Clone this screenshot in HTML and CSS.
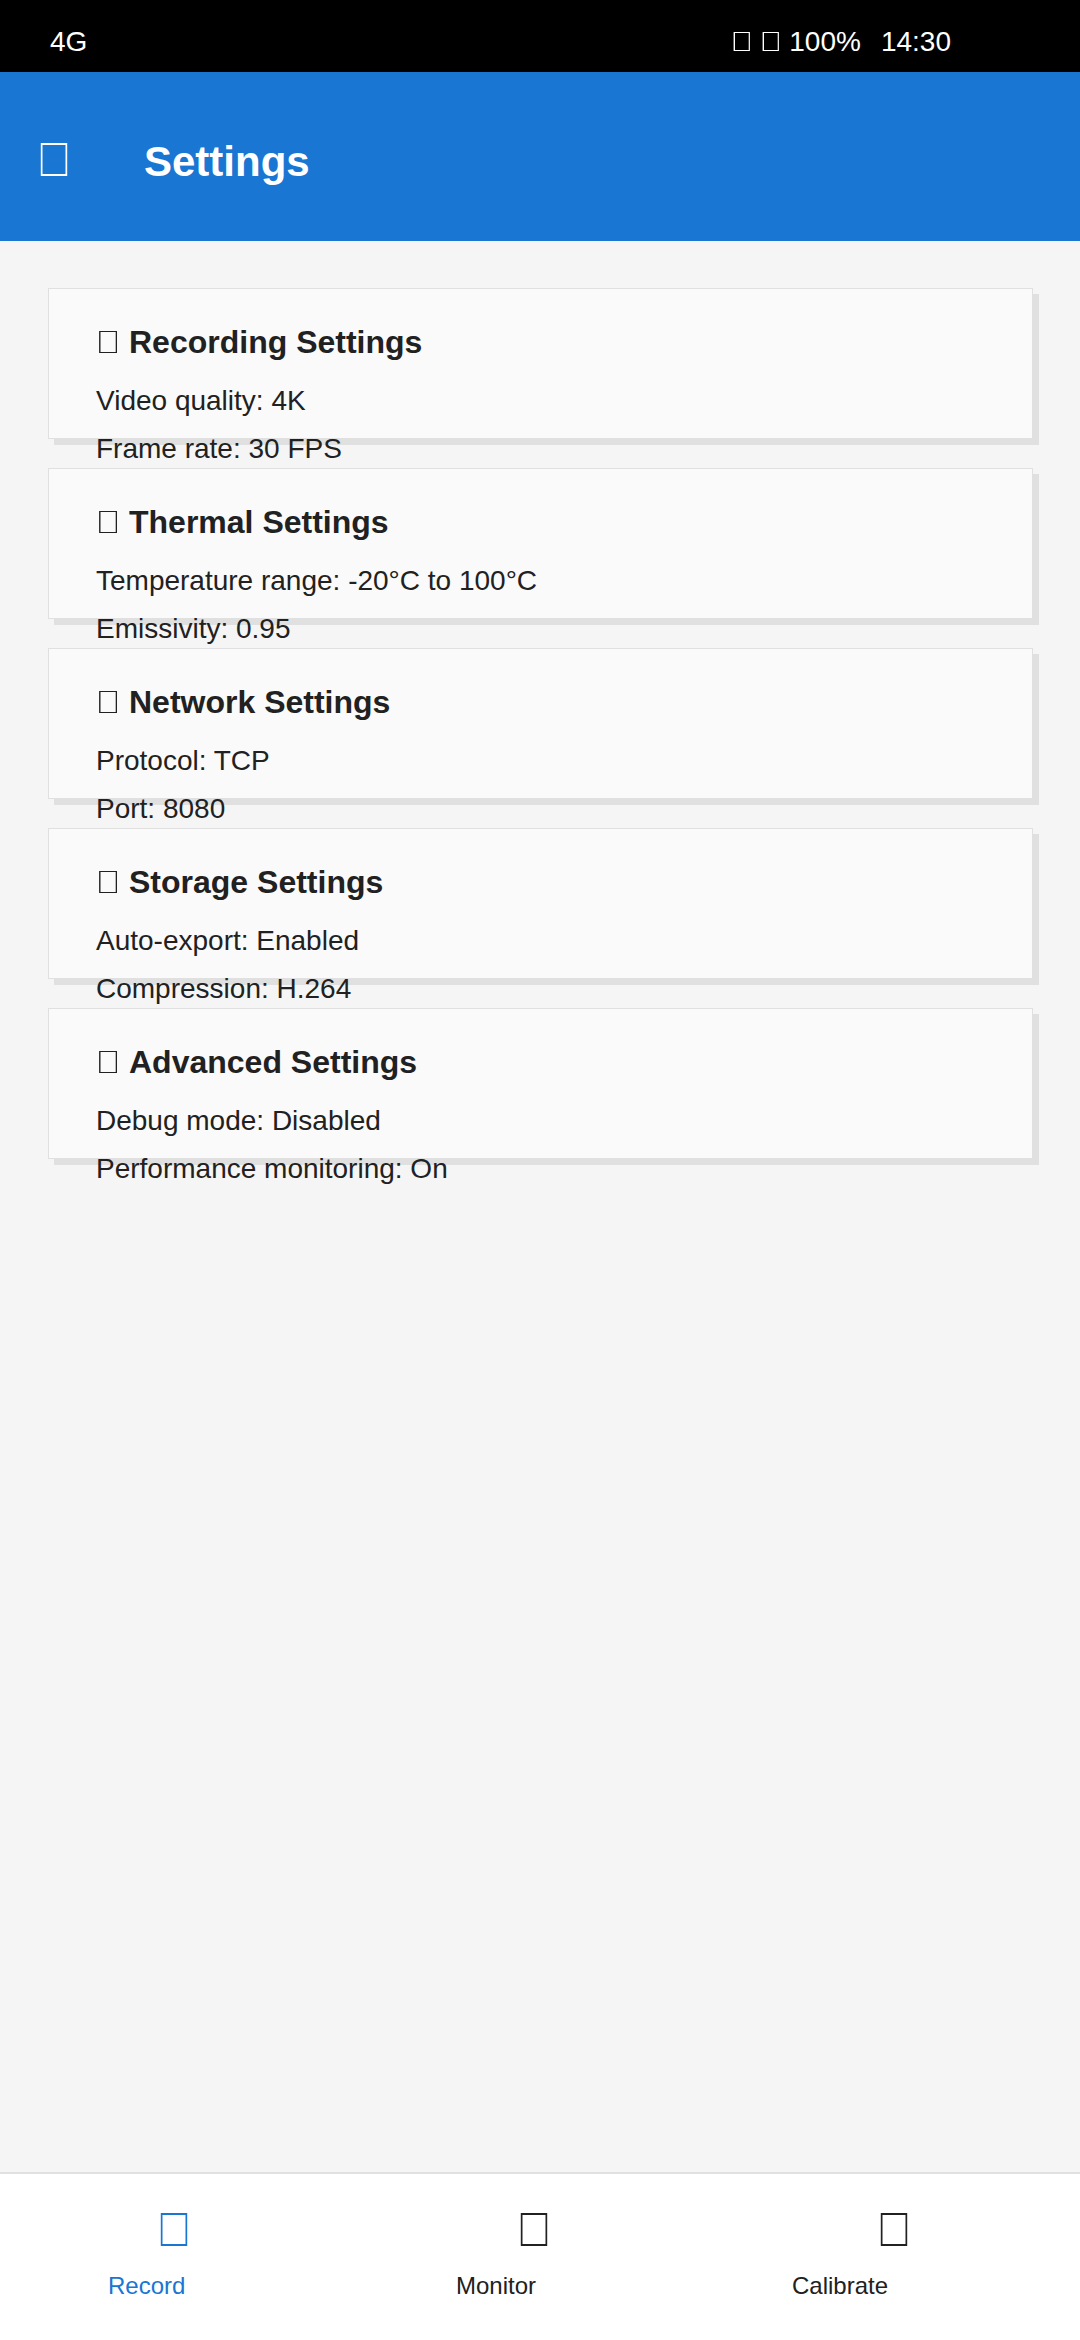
FILE: index.html
```html
<!DOCTYPE html>
<html lang="en">
<head>
  <meta charset="utf-8">
  <meta name="viewport" content="width=device-width, initial-scale=1">
  <title>Settings</title>
  <link rel="stylesheet" href="styles.css">
</head>
<body>
  <svg class="symbols" aria-hidden="true">
    <symbol id="box-sm" viewBox="0 0 21 32">
      <path fill-rule="evenodd" d="M2.6 6H18.9V25H2.6ZM4 7V24H17.7V7Z"/>
    </symbol>
    <symbol id="box-md" viewBox="0 0 24 40">
      <path fill-rule="evenodd" d="M3.1 9H21V31H3.1ZM4.5 10V30H19.7V10Z"/>
    </symbol>
    <symbol id="box-lg" viewBox="0 0 36 48">
      <path fill-rule="evenodd" d="M4.8 5H31.2V38H4.8ZM6.5 7V36H29.5V7Z"/>
    </symbol>
  </svg>

  <div class="screen">
    <div class="status-bar">
      <span>4G</span>
      <div class="status-right">
        <div class="status-battery">
          <svg class="icon-sm" aria-hidden="true"><use href="#box-sm"/></svg>
          <svg class="icon-sm" aria-hidden="true"><use href="#box-sm"/></svg>
          <span>100%</span>
        </div>
        <span>14:30</span>
      </div>
    </div>

    <header class="app-bar">
      <button class="back-button" type="button" aria-label="Back">
        <svg class="icon-lg" aria-hidden="true"><use href="#box-lg"/></svg>
      </button>
      <h1 class="app-title">Settings</h1>
    </header>

    <main class="card-list">
      <section class="card">
        <h2 class="card-title"><svg class="icon-md" aria-hidden="true"><use href="#box-md"/></svg>Recording Settings</h2>
        <div class="card-details">
          <p>Video quality: 4K</p>
          <p>Frame rate: 30 FPS</p>
        </div>
      </section>
      <section class="card">
        <h2 class="card-title"><svg class="icon-md" aria-hidden="true"><use href="#box-md"/></svg>Thermal Settings</h2>
        <div class="card-details">
          <p>Temperature range: -20°C to 100°C</p>
          <p>Emissivity: 0.95</p>
        </div>
      </section>
      <section class="card">
        <h2 class="card-title"><svg class="icon-md" aria-hidden="true"><use href="#box-md"/></svg>Network Settings</h2>
        <div class="card-details">
          <p>Protocol: TCP</p>
          <p>Port: 8080</p>
        </div>
      </section>
      <section class="card">
        <h2 class="card-title"><svg class="icon-md" aria-hidden="true"><use href="#box-md"/></svg>Storage Settings</h2>
        <div class="card-details">
          <p>Auto-export: Enabled</p>
          <p>Compression: H.264</p>
        </div>
      </section>
      <section class="card">
        <h2 class="card-title"><svg class="icon-md" aria-hidden="true"><use href="#box-md"/></svg>Advanced Settings</h2>
        <div class="card-details">
          <p>Debug mode: Disabled</p>
          <p>Performance monitoring: On</p>
        </div>
      </section>
    </main>

    <nav class="bottom-nav" aria-label="Main">
      <button class="nav-item nav-item-active" type="button">
        <svg class="icon-lg nav-icon" aria-hidden="true"><use href="#box-lg"/></svg>
        <span class="nav-label" style="--chars: 6">Record</span>
      </button>
      <button class="nav-item" type="button">
        <svg class="icon-lg nav-icon" aria-hidden="true"><use href="#box-lg"/></svg>
        <span class="nav-label" style="--chars: 7">Monitor</span>
      </button>
      <button class="nav-item" type="button">
        <svg class="icon-lg nav-icon" aria-hidden="true"><use href="#box-lg"/></svg>
        <span class="nav-label" style="--chars: 9">Calibrate</span>
      </button>
    </nav>
  </div>
</body>
</html>
```
FILE: styles.css
```css
:root {
  --primary: #1976d2;
  --background: #f5f5f5;
  --surface: #fafafa;
  --outline: #e0e0e0;
  --text: #212121;
}

* {
  box-sizing: border-box;
}

body {
  margin: 0;
  background: var(--background);
  color: var(--text);
  font-family: "Liberation Sans", Arial, sans-serif;
  font-size: 28px;
  line-height: 32px;
}

h1,
h2,
p {
  margin: 0;
}

button {
  padding: 0;
  border: 0;
  background: none;
  color: inherit;
  font: inherit;
  cursor: pointer;
}

svg {
  display: block;
  flex: none;
  fill: currentColor;
}

.symbols {
  display: none;
}

.icon-sm {
  width: 21px;
  height: 32px;
}

.icon-md {
  width: 24px;
  height: 40px;
}

.icon-lg {
  width: 36px;
  height: 48px;
}

.screen {
  display: flex;
  flex-direction: column;
  min-height: 100vh;
}

/* Status bar */
.status-bar {
  display: flex;
  justify-content: space-between;
  padding: 26px 129px 14px 50px;
  background: #000;
  color: #fff;
}

.status-right {
  display: flex;
  gap: 20px;
}

.status-battery {
  display: flex;
  gap: 8px;
}

/* App bar */
.app-bar {
  display: flex;
  gap: 72px;
  padding: 66px 36px 55px;
  background: var(--primary);
  color: #fff;
}

.app-title {
  font-size: 42px;
  line-height: 48px;
}

/* Cards */
.card-list {
  display: flex;
  flex: 1;
  flex-direction: column;
  gap: 29px;
  padding: 47px 47px 47px 48px;
}

.card {
  padding: 33px 47px 0;
  border: 1px solid var(--outline);
  background: var(--surface);
  box-shadow: 6px 6px 0 var(--outline);
}

.card-title {
  display: flex;
  gap: 9px;
  margin-bottom: 15px;
  font-size: 32px;
  line-height: 40px;
}

/* The last line hangs over the lower edge of the card. */
.card-details {
  margin-bottom: -35px;
  line-height: 48px;
}

/* Bottom navigation */
.bottom-nav {
  display: grid;
  grid-template-columns: repeat(3, 1fr);
  border-top: 2px solid var(--outline);
  background: #fff;
}

.nav-item {
  display: flex;
  flex-direction: column;
  align-items: center;
  gap: 16px;
  padding: 34px 0 40px;
}

.nav-item-active {
  color: var(--primary);
}

.nav-icon {
  margin-right: 12px;
}

.nav-label {
  width: calc(var(--chars) * 1em);
  font-size: 24px;
  line-height: 28px;
  text-align: left;
}
```
